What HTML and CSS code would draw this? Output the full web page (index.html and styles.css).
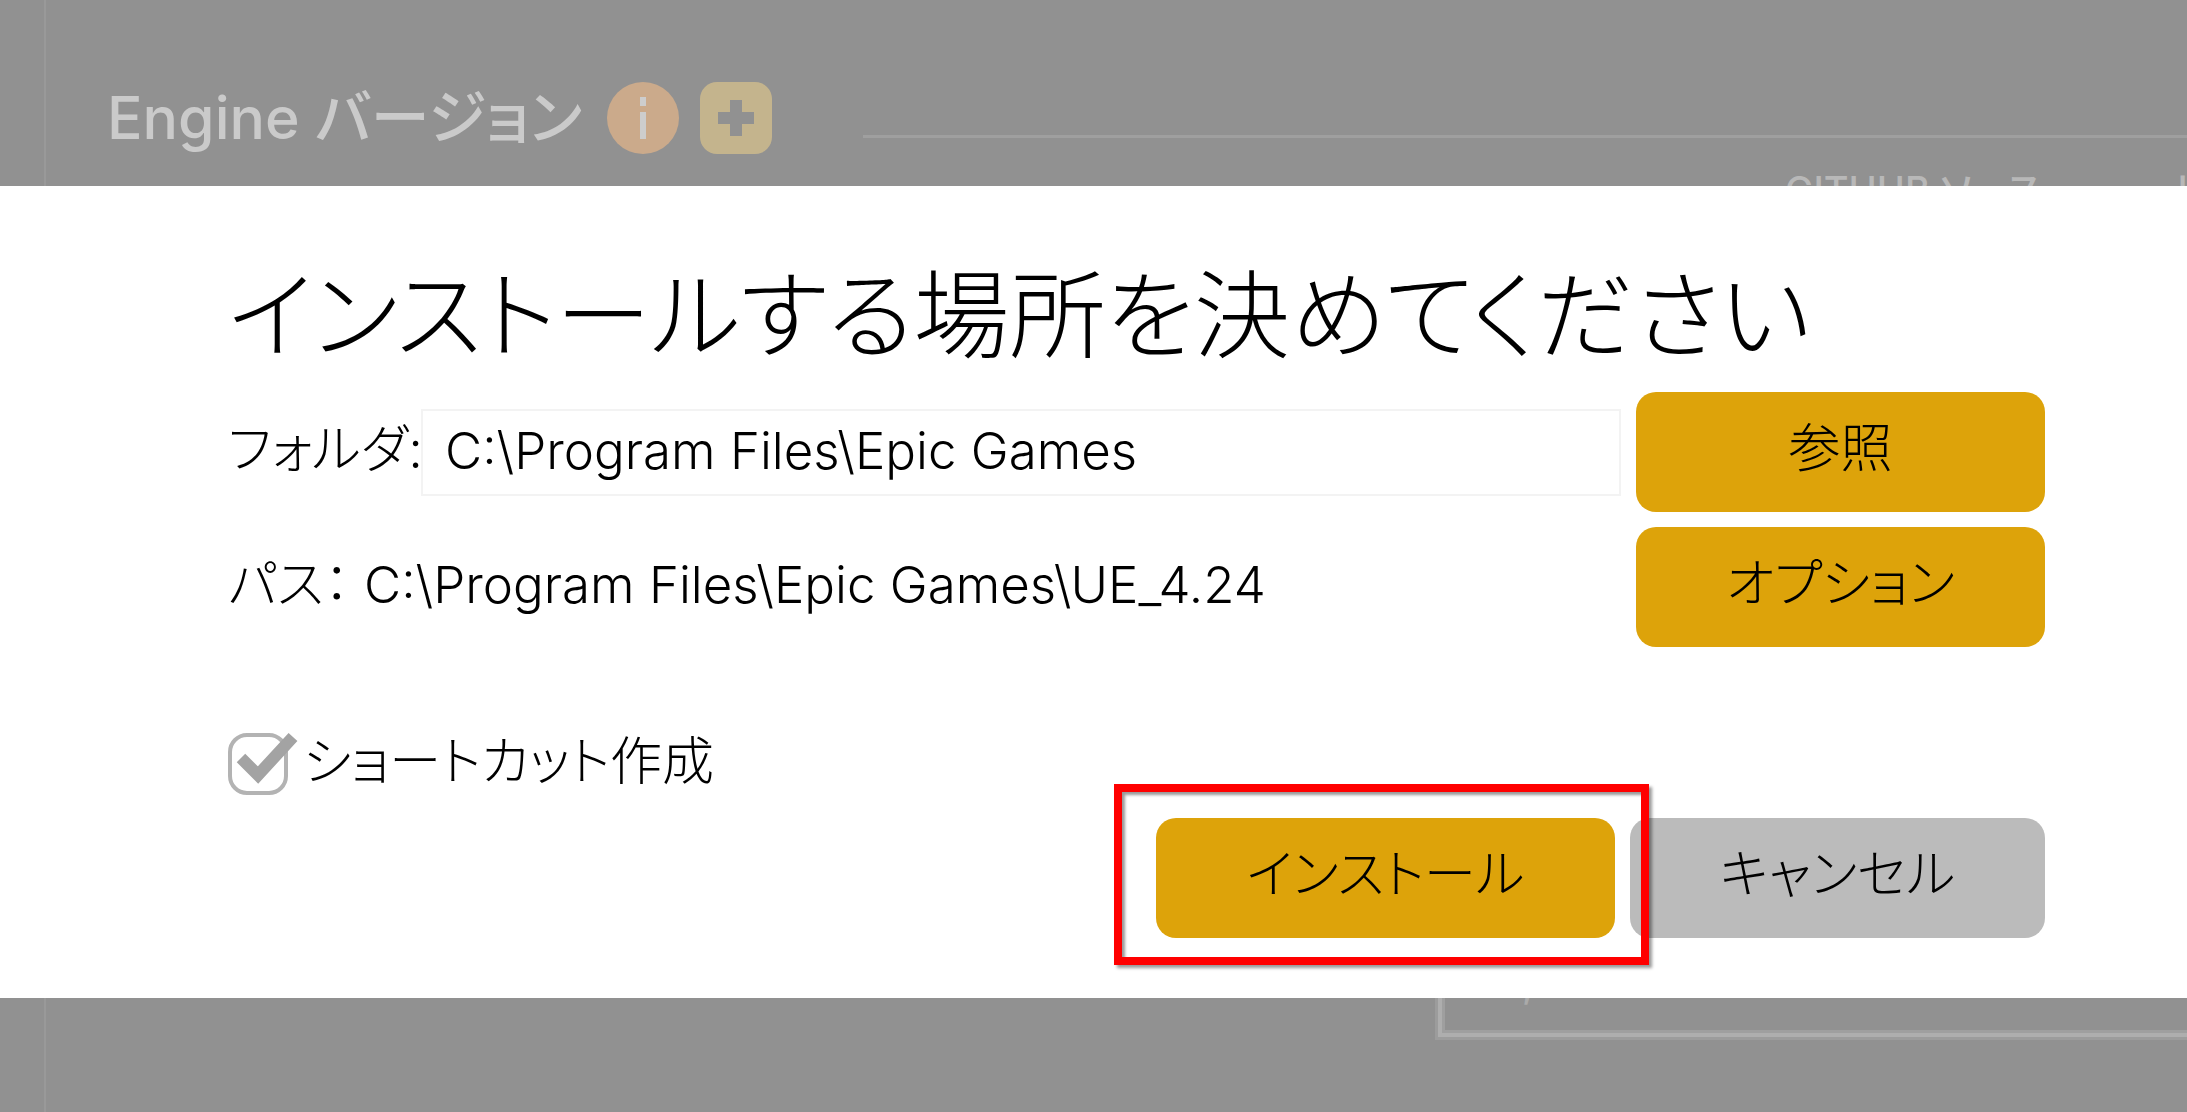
FILE: index.html
```html
<!DOCTYPE html>
<html lang="ja">

<head>
    <meta charset="UTF-8">
    <meta name="viewport" content="width=device-width, initial-scale=1.0">
    <title>Engine バージョン</title>
    <link rel="stylesheet" href="styles.css">
</head>

<body>
    <header class="backdrop backdrop-top">
        <div class="engine-header">
            <h1>Engine バージョン</h1>
            <button type="button" class="icon-button" aria-label="情報">
                <svg viewBox="0 0 72 72">
                    <circle cx="36" cy="36" r="36" fill="#cbaa8b" />
                    <path d="M33 15h6v9h-6zM33 30h6v27h-6z" fill="#cdcdcd" />
                </svg>
            </button>
            <button type="button" class="icon-button add-button" aria-label="追加">
                <svg viewBox="0 0 72 72">
                    <rect width="72" height="72" rx="17" fill="#c4b48d" />
                    <path d="M30 18h12v12h12v12H42v12H30V42H18V30h12z" fill="#919191" />
                </svg>
            </button>
            <hr>
        </div>
        <nav class="links">
            <a href="#">GITHUB ソース</a>
            <a href="#">リリース</a>
        </nav>
    </header>

    <main class="dialog">
        <h2>インストールする場所を決めてください</h2>
        <form>
            <div class="row">
                <label for="folder">フォルダ:</label>
                <input type="text" id="folder" name="folder" value="C:\Program Files\Epic Games">
                <button type="button" class="side-button">参照</button>
            </div>
            <div class="row">
                <p class="path"><span>パス：</span>C:\Program Files\Epic Games\UE_4.24</p>
                <button type="button" class="side-button">オプション</button>
            </div>
            <div class="shortcut">
                <input type="checkbox" id="shortcut" name="shortcut" checked>
                <label for="shortcut">
                    <svg viewBox="0 0 70 66">
                        <rect x="2" y="3" width="56" height="58" rx="17" fill="#fff" stroke="#b3b3b3" stroke-width="4" />
                        <path d="M13 26l17 17L65 5" fill="none" stroke="#a3a3a3" stroke-width="12" />
                    </svg>
                    <span>ショートカット作成</span>
                </label>
            </div>
            <div class="actions">
                <div class="highlight">
                    <button type="submit" class="install">インストール</button>
                </div>
                <button type="button" class="cancel">キャンセル</button>
            </div>
        </form>
    </main>

    <footer class="backdrop backdrop-bottom">
        <div class="card">
            <p>,</p>
        </div>
    </footer>
</body>

</html>
```
FILE: styles.css
```css
* {
    box-sizing: border-box;
}

body {
    margin: 0;
    min-height: 100vh;
    display: flex;
    flex-direction: column;
    background-color: #919191;
    font-family: Inter, "Noto Sans CJK JP", sans-serif;
    font-weight: 300;
    font-size: 52px;
    line-height: 76px;
    font-feature-settings: "palt";
    color: #000;
}

h1,
h2,
p {
    margin: 0;
}

button,
input {
    font: inherit;
    font-feature-settings: inherit;
    color: inherit;
}

button {
    height: 120px;
    padding: 0 0 6px;
    border: none;
    border-radius: 20px;
    background-color: #dda30a;
    cursor: pointer;
}

/* dimmed page behind the dialog */
.backdrop {
    margin-left: 44px;
    border-left: 2px solid #999;
    overflow: hidden;
}

.backdrop-top {
    height: 186px;
    padding: 80px 0 0 61px;
}

.engine-header {
    display: flex;
    align-items: center;
    height: 76px;
}

.engine-header h1 {
    font-size: 59px;
    font-weight: 500;
    color: #cacaca;
    white-space: nowrap;
    margin-right: 25px;
}

.icon-button {
    width: 72px;
    height: 72px;
    padding: 0;
    background: none;
}

.icon-button svg {
    display: block;
}

.add-button {
    margin-left: 21px;
}

.engine-header hr {
    flex: 1;
    height: 3px;
    align-self: flex-start;
    margin: 55px 0 0 91px;
    border: none;
    background-color: #9f9f9f;
}

.links {
    display: flex;
    gap: 134px;
    padding: 8px 0 0 1678px;
}

.links a {
    font-size: 38px;
    font-weight: 500;
    line-height: 52px;
    color: #b8b8b8;
    text-decoration: none;
    white-space: nowrap;
}

.dialog {
    background-color: #fff;
    padding: 60px 142px 60px 228px;
}

.dialog h2 {
    font-size: 96px;
    font-weight: 300;
    line-height: 138px;
    margin-bottom: 8px;
    white-space: nowrap;
}

.row {
    display: flex;
    align-items: center;
    margin-bottom: 15px;
}

.row label,
.path {
    padding-bottom: 4px;
    white-space: nowrap;
}

.row label {
    width: 193px;
}

.row input {
    flex: 1;
    min-width: 0;
    height: 87px;
    padding: 0 22px 4px;
    border: 2px solid #f3f3f3;
    background-color: #fff;
    font-size: 51px;
    outline: none;
}

.side-button {
    width: 409px;
    margin-left: 15px;
}

.path {
    flex: 1;
    font-size: 51px;
}

.path span {
    display: inline-block;
    width: 136px;
    font-size: 52px;
}

.shortcut {
    margin-top: 80px;
    height: 76px;
}

/* the drawn box in the label stands in for the native one */
.shortcut input {
    position: absolute;
    opacity: 0;
}

.shortcut label {
    display: flex;
    align-items: center;
    gap: 5px;
    cursor: pointer;
}

.shortcut span {
    padding-bottom: 6px;
    line-height: 70px;
}

.shortcut svg {
    width: 70px;
    height: 66px;
}

.actions {
    display: flex;
    justify-content: flex-end;
    gap: 15px;
    margin-top: 15px;
}

.highlight {
    position: relative;
    display: flex;
}

.highlight::after {
    content: "";
    position: absolute;
    inset: -34px -34px -27px -42px;
    border: 8px solid #f00;
    box-shadow: 3px 3px 3px rgba(0, 0, 0, 0.4), inset 3px 3px 3px rgba(0, 0, 0, 0.4);
    pointer-events: none;
}

.install {
    width: 459px;
}

.cancel {
    width: 415px;
    background-color: #bbb;
}

.backdrop-bottom {
    flex: 1;
}

.card {
    height: 42px;
    margin-left: 1389px;
    padding-left: 84px;
    border-left: 3px solid #9c9c9c;
    border-bottom: 3px solid #9c9c9c;
    box-shadow: inset 4px -4px 0 #aeaeae, inset 7px -7px 0 #9f9f9f;
    overflow: hidden;
}

.card p {
    margin-top: -38px;
    font-size: 38px;
    font-weight: 500;
    line-height: 48px;
    color: #aaa;
}
```
